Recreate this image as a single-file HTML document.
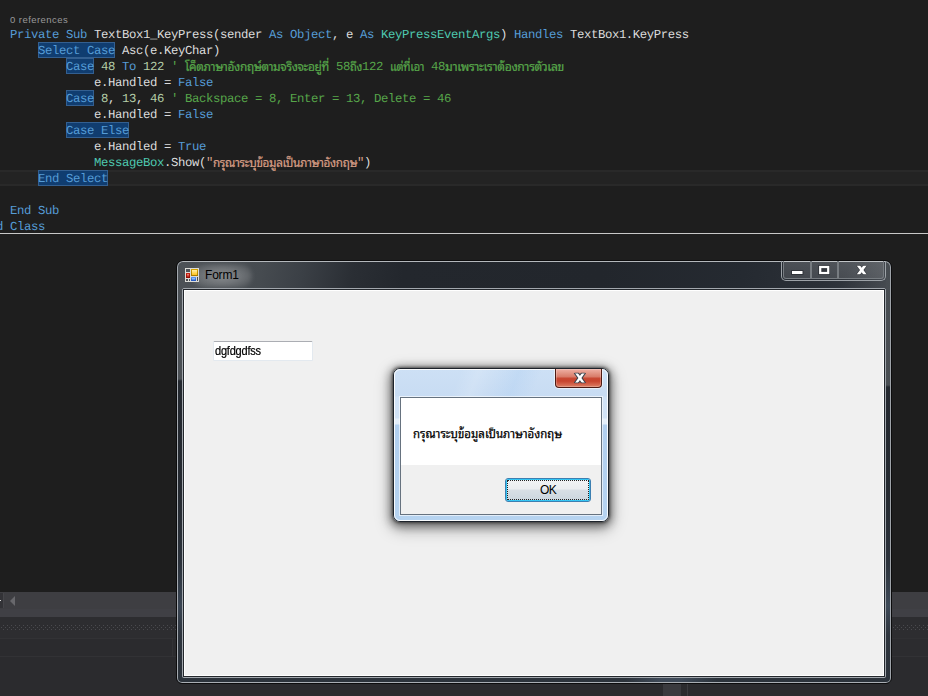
<!DOCTYPE html>
<html lang="th">
<head>
<meta charset="utf-8">
<title>Form1</title>
<style>
html,body{margin:0;padding:0;}
body{width:928px;height:696px;overflow:hidden;background:#1e1e1e;position:relative;font-family:"Liberation Sans","Loma","Noto Sans Thai",sans-serif;}
.abs{position:absolute;}
/* ---------- code editor ---------- */
#code{position:absolute;left:0;top:0;width:928px;height:233px;overflow:hidden;}
.ln{position:absolute;left:-18px;height:16px;line-height:16px;margin-top:1px;white-space:pre;font-family:"Liberation Mono","DejaVu Sans Mono",monospace;font-size:12.3px;color:#dcdcdc;letter-spacing:-0.3812px;text-rendering:geometricPrecision;}
.k{color:#569cd6;}
.t{color:#4ec9b0;}
.c{color:#57a64a;}
.s{color:#d69d85;}
.n{color:#b5cea8;}
.hb{position:absolute;height:16px;box-sizing:border-box;background:#103d70;border:1px solid #335f90;}
.th{display:inline-block;height:16px;vertical-align:top;overflow:visible;}
.th text{font-family:"Liberation Sans","Noto Sans Thai Looped","Loma",sans-serif;font-size:12.300px;fill:currentColor;stroke:currentColor;stroke-width:.2px;}
#refs{position:absolute;left:10px;top:14px;font-size:9.5px;letter-spacing:0.45px;line-height:12px;color:#999999;font-family:"Liberation Sans",sans-serif;}
#curline{position:absolute;left:0;top:170px;width:928px;height:16px;box-sizing:border-box;border-top:2px solid #292929;border-bottom:2px solid #292929;background:#232323;}
#split{position:absolute;left:0;top:233px;width:928px;height:1px;background:#c8c8c8;}

/* ---------- VS bottom chrome ---------- */
#hscroll{position:absolute;left:0;top:592px;width:928px;height:25px;background:linear-gradient(180deg,#3e3e42 0,#3e3e42 17px,#404045 17px,#404045 25px);}
#hsbox{position:absolute;left:0;top:593px;width:3px;height:15px;background:#333337;border-right:1px solid #46464a;}
#hsbox i{position:absolute;left:0;top:7px;width:1px;height:1px;background:#d8d8d8;}
#hsarrow{position:absolute;left:10px;top:595.5px;width:0;height:0;border-top:5px solid transparent;border-bottom:5px solid transparent;border-right:5px solid #68686c;}
#lower{position:absolute;left:0;top:617px;width:928px;height:79px;background:#2d2d30;}
#dots{position:absolute;left:0;top:8px;width:928px;height:5px;}
#lowbox{position:absolute;left:-1px;top:21px;width:174px;height:19px;border:1px solid #323235;background:#2b2b2e;box-sizing:border-box;}
#lowright{position:absolute;left:173px;top:21px;width:755px;height:19px;border-bottom:1px solid #323235;border-top:1px solid #303033;background:#2c2c2f;box-sizing:border-box;}
#lowest{position:absolute;left:0;top:40px;width:928px;height:39px;background:#2b2b2e;}
#tabblk{position:absolute;left:663px;top:67px;width:18px;height:12px;background:#3a3a3e;}
#tabln{position:absolute;left:687px;top:67px;width:1px;height:12px;background:#3c3c40;}

/* ---------- Form1 window (Aero dark glass) ---------- */
#win{position:absolute;left:176px;top:260px;width:716px;height:424px;overflow:hidden;box-sizing:border-box;border:1px solid #0c0c0d;border-radius:7px 7px 6px 6px;
 background:
  linear-gradient(115deg, rgba(255,255,255,0) 74%, rgba(255,255,255,.07) 79%, rgba(255,255,255,.02) 83%, rgba(255,255,255,.09) 88%, rgba(255,255,255,.10) 100%),
  linear-gradient(100deg,#4d5257 0px,#464b50 85px,#3b4046 125px,#2a2e34 175px,#23272d 225px,#22262c 420px,#252a31 560px,#2b3037 640px,#3a3f45 716px);
}
#win .inl{position:absolute;left:0;top:0;right:0;bottom:0;border:1px solid #a7abb0;border-radius:6px 6px 5px 5px;box-sizing:border-box;
 border-color:#b4b8bc #9ea3a9 #a9aeb4 #a4a9af;}
#win .sideL{position:absolute;left:1px;top:2px;width:4px;height:420px;background:linear-gradient(180deg,#4c5156 0,#4b5055 116px,#242930 118px,#252a31 230px,#2b323b 300px,#3a4553 343px,#2e353e 372px,#2b323a 416px);}
#win .sideR{position:absolute;right:1px;top:2px;width:4px;height:420px;background:linear-gradient(180deg,#474c51 0,#494e53 122px,#242930 124px,#252a31 230px,#2b323b 300px,#3d4957 343px,#2e353e 372px,#2b323a 416px);}
#win .botm{position:absolute;left:5px;right:5px;bottom:1px;height:4px;background:linear-gradient(90deg,#2c333b,#2c333b 63%,#3f4a58 68%,#3f4a58 71%,#2c333b 76%,#2c333b);}
#title{position:absolute;left:28px;top:7px;font-size:12px;line-height:14px;color:#000;letter-spacing:-0.2px;}
#tglow{position:absolute;left:16px;top:3px;width:59px;height:24px;border-radius:12px;background:radial-gradient(ellipse at center,rgba(255,255,255,.34) 0%,rgba(255,255,255,.22) 45%,rgba(255,255,255,0) 100%);filter:blur(2px);}
#cli-o{position:absolute;left:5px;top:27px;width:704px;height:390px;box-sizing:border-box;border:1px solid #a2a7ad;border-radius:2px;}
#cli-d{position:absolute;left:6px;top:28px;width:702px;height:388px;box-sizing:border-box;border:1px solid #23272c;}
#cli{position:absolute;left:7px;top:29px;width:700px;height:386px;box-sizing:border-box;border:1px solid #fff;background:#f0f0f0;}
#tb{position:absolute;left:29px;top:51px;width:100px;height:20px;box-sizing:border-box;border:1px solid #e3e9ef;border-top-color:#abadb3;border-radius:1.500px;background:#fff;}
#tb span{position:absolute;left:1px;top:3px;font-size:11px;line-height:13px;letter-spacing:-0.2px;color:#000;transform:scaleY(1.13);transform-origin:0 10.500px;-webkit-text-stroke:.2px #000;font-family:"Liberation Sans",sans-serif;}
#cbtns{position:absolute;left:604px;top:0;width:105px;height:20px;box-sizing:border-box;border:1px solid #9da2a7;border-top:none;border-radius:0 0 5px 5px;}
#cbtns .b{position:absolute;top:0;height:18px;box-sizing:border-box;border:1px solid #777c81;border-top:none;background:linear-gradient(180deg,rgba(255,255,255,.17),rgba(255,255,255,.12));}

/* ---------- MessageBox ---------- */
#mb{position:absolute;left:393px;top:368px;width:216px;height:154px;box-sizing:border-box;border:1px solid #1d232b;border-radius:7px;
 background:linear-gradient(112deg,rgba(255,255,255,0) 30%,rgba(255,255,255,.14) 38%,rgba(255,255,255,0) 46%,rgba(170,205,242,.3) 56%,rgba(255,255,255,0) 66%) 0 0/100% 28px no-repeat,linear-gradient(180deg,#cde0f5 0px,#c8dcf3 27px,#d0e2f6 28px,#d2e3f6 49px,#e6f0fb 50px,#e3eefa 55px,#b1cfef 56px,#b6d3f0 100%);
 box-shadow:0 0 3px 1px rgba(0,0,0,.5),0 2px 9px 3px rgba(0,0,0,.4),0 5px 16px 3px rgba(0,0,0,.27);}
#mb .inl{position:absolute;left:0;top:0;right:0;bottom:0;border:1px solid rgba(255,255,255,.92);border-radius:6px;}
#mb .cl{position:absolute;left:6px;top:28px;width:202px;height:118px;box-sizing:border-box;border:1px solid #66727f;background:#fff;box-shadow:0 0 0 1px rgba(255,255,255,.6);}
#mb .ft{position:absolute;left:0;top:67px;width:200px;height:49px;background:#f0f0f0;}
#mb .x{position:absolute;left:161px;top:0;width:47px;height:19px;box-sizing:border-box;border:1px solid #4d1a13;border-top:none;border-radius:0 0 4px 4px;
 background:linear-gradient(180deg,#f0b0a5 0px,#e39686 4px,#d87a68 8px,#c94a35 9px,#c7432d 12px,#d56a52 16px,#dd8468 18px);
 box-shadow:1px 0 0 rgba(255,255,255,.55),-1px 0 0 rgba(255,255,255,.55),0 1px 0 rgba(255,255,255,.55), inset 0 0 0 1px rgba(255,255,255,.22);}
#ok{position:absolute;left:104px;top:80px;width:86px;height:24px;box-sizing:border-box;border:1px solid #3c7fb1;border-radius:3px;
 background:linear-gradient(180deg,#f2f4f6 0,#eaedf0 10px,#d8dfe5 11px,#cbd6de 22px);
 box-shadow:inset 0 0 0 1px #34c6f4;font-size:12px;line-height:22px;text-align:center;color:#000;letter-spacing:-0.6px;}
#ok i{position:absolute;left:1px;top:1px;right:1px;bottom:1px;border:1px dotted #222;}
</style>
</head>
<body>
<div id="code">
<div id="refs">0 references</div>
<div id="curline"></div>
<div class="hb" style="left:38px;top:42px;width:77px"></div>
<div class="hb" style="left:66px;top:58px;width:28px"></div>
<div class="hb" style="left:66px;top:90px;width:28px"></div>
<div class="hb" style="left:66px;top:122px;width:63px"></div>
<div class="hb" style="left:38px;top:170px;width:70px"></div>
<div class="ln" style="top:26px">    <span class="k">Private Sub</span> TextBox1_KeyPress(sender <span class="k">As Object</span>, e <span class="k">As</span> <span class="t">KeyPressEventArgs</span>) <span class="k">Handles</span> TextBox1.KeyPress</div>
<div class="ln" style="top:42px">        <span class="k">Select Case</span> Asc(e.KeyChar)</div>
<div class="ln" style="top:58px">            <span class="k">Case</span> <span class="n">48</span> <span class="k">To</span> <span class="n">122</span> <span class="c">' <svg class="th" width="151" height="16" viewBox="0 0 151 16"><text x="0" y="11.500" textLength="144" lengthAdjust="spacingAndGlyphs">โค็ตภาษาอังกฤษ์ตามจริงจะอยู่ที่</text></svg>58<svg class="th" width="12" height="16" viewBox="0 0 12 16"><text x="0" y="11.500" textLength="12" lengthAdjust="spacingAndGlyphs">ถึง</text></svg>122 <svg class="th" width="41" height="16" viewBox="0 0 41 16"><text x="0" y="11.500" textLength="34" lengthAdjust="spacingAndGlyphs">แต่ที่เอา</text></svg>48<svg class="th" width="119" height="16" viewBox="0 0 119 16"><text x="0" y="11.500" textLength="119" lengthAdjust="spacingAndGlyphs">มาเพราะเราต้องการตัวเลข</text></svg></span></div>
<div class="ln" style="top:74px">                e.Handled = <span class="k">False</span></div>
<div class="ln" style="top:90px">            <span class="k">Case</span> <span class="n">8</span>, <span class="n">13</span>, <span class="n">46</span> <span class="c">' Backspace = 8, Enter = 13, Delete = 46</span></div>
<div class="ln" style="top:106px">                e.Handled = <span class="k">False</span></div>
<div class="ln" style="top:122px">            <span class="k">Case Else</span></div>
<div class="ln" style="top:138px">                e.Handled = <span class="k">True</span></div>
<div class="ln" style="top:154px">                <span class="t">MessageBox</span>.Show(<span class="s">"<svg class="th" width="144" height="16" viewBox="0 0 144 16"><text x="0" y="11.500" textLength="144" lengthAdjust="spacingAndGlyphs">กรุณาระบุข้อมูลเป็นภาษาอังกฤษ</text></svg>"</span>)</div>
<div class="ln" style="top:170px">        <span class="k">End Select</span></div>
<div class="ln" style="top:202px">    <span class="k">End Sub</span></div>
<div class="ln" style="top:218px"><span class="k">End Class</span></div>
</div>
<div id="split"></div>

<div id="hscroll"></div><div id="hsbox"><i></i></div><div id="hsarrow"></div>
<div id="lower">
  <svg id="dots" width="928" height="5" viewBox="0 0 928 5"><defs><pattern id="dp" width="4" height="4" patternUnits="userSpaceOnUse"><rect x="3" y="0" width="1" height="1" fill="#4a4a4e"/><rect x="1" y="2" width="1" height="1" fill="#4a4a4e"/></pattern></defs><rect width="928" height="5" fill="url(#dp)"/></svg>
  <div id="lowbox"></div><div id="lowright"></div>
  <div id="lowest"></div>
  <div id="tabblk"></div><div id="tabln"></div>
</div>

<div id="win">
  <div class="sideL"></div><div class="sideR"></div><div class="botm"></div>
  <div class="inl"></div>
  <div id="tglow"></div>
  <svg class="abs" style="left:8px;top:7px" width="16" height="16" viewBox="0 0 16 16">
    <defs>
      <linearGradient id="gy" x1="0" y1="0" x2="0" y2="1"><stop offset="0" stop-color="#fff0a8"/><stop offset="1" stop-color="#ffc41c"/></linearGradient>
      <linearGradient id="gr" x1="0" y1="0" x2="0" y2="1"><stop offset="0" stop-color="#f4887c"/><stop offset="1" stop-color="#b81a10"/></linearGradient>
      <linearGradient id="gb" x1="0" y1="0" x2="0" y2="1"><stop offset="0" stop-color="#a8ccff"/><stop offset="1" stop-color="#3f7fe6"/></linearGradient>
      <linearGradient id="gyb" x1="0" y1="0" x2="0" y2="1"><stop offset="0" stop-color="#d6a400"/><stop offset="1" stop-color="#a47a00"/></linearGradient>
      <linearGradient id="grb" x1="0" y1="0" x2="0" y2="1"><stop offset="0" stop-color="#cc2414"/><stop offset="1" stop-color="#8a0c06"/></linearGradient>
      <linearGradient id="gbb" x1="0" y1="0" x2="0" y2="1"><stop offset="0" stop-color="#5e9cf0"/><stop offset="1" stop-color="#1f52bc"/></linearGradient>
    </defs>
    <rect x="0" y="0" width="14" height="14" fill="#dcdcd8"/>
    <rect x="1" y="1" width="4" height="3" fill="#50545a"/>
    <rect x="1" y="5" width="4" height="5" fill="url(#grb)"/><rect x="2" y="6" width="2" height="3" fill="url(#gr)"/>
    <rect x="1" y="11" width="2" height="2" fill="#4a4d52"/><rect x="4" y="11" width="1" height="2" fill="#4a4d52"/>
    <rect x="6" y="1" width="7" height="7" fill="url(#gyb)"/><rect x="7" y="2" width="5" height="5" fill="url(#gy)"/>
    <rect x="6" y="9" width="5" height="4" fill="url(#gbb)"/><rect x="7" y="10" width="3" height="2" fill="url(#gb)"/>
    <rect x="12" y="9" width="1" height="4" fill="#4a4d52"/>
  </svg>
  <div id="title">Form1</div>
  <div id="cbtns">
    <div class="b" style="left:1px;width:28px;border-radius:0 0 0 3px"></div>
    <div class="b" style="left:29px;width:27px"></div>
    <div class="b" style="left:56px;width:46px;border-radius:0 0 3px 0"></div>
    <svg class="abs" style="left:0;top:0" width="105" height="20" viewBox="0 0 105 20">
      <rect x="9" y="9" width="12.500" height="5" fill="rgba(15,18,24,.38)"/><rect x="10" y="10" width="10.500" height="3" fill="#fff"/>
      <rect x="36" y="4" width="12" height="10" fill="rgba(15,18,24,.38)"/><rect x="38.200" y="6" width="8" height="6" fill="none" stroke="#fff" stroke-width="2.200"/>
      <clipPath id="cxa"><rect x="72" y="4.200" width="16" height="9.600"/></clipPath><clipPath id="cxb"><rect x="72" y="4.700" width="16" height="8.600"/></clipPath>
      <g clip-path="url(#cxa)" stroke="rgba(15,18,24,.45)" stroke-width="3.900" fill="none"><line x1="75.600" y1="3.500" x2="83.800" y2="14.500"/><line x1="83.800" y1="3.500" x2="75.600" y2="14.500"/></g>
      <g clip-path="url(#cxb)" stroke="#fff" stroke-width="2.800" fill="none"><line x1="75.600" y1="3.500" x2="83.800" y2="14.500"/><line x1="83.800" y1="3.500" x2="75.600" y2="14.500"/></g>
    </svg>
  </div>
  <div id="cli-o"></div><div id="cli-d"></div>
  <div id="cli"></div>
  <div id="tb" style="left:36px;top:80px"><span>dgfdgdfss</span></div>
</div>

<div id="mb">
  <div class="inl"></div>
  <div class="x"><svg class="abs" style="left:17px;top:3px" width="14" height="12" viewBox="0 0 14 12"><clipPath id="cxc"><rect x="0" y="0.700" width="14" height="10.600"/></clipPath><clipPath id="cxd"><rect x="0" y="1.500" width="14" height="9"/></clipPath>
    <g clip-path="url(#cxc)" stroke="#3d424b" stroke-width="4.500" fill="none"><line x1="2.600" y1="0" x2="11.200" y2="12"/><line x1="11.200" y1="0" x2="2.600" y2="12"/></g>
    <g clip-path="url(#cxd)" stroke="#fff" stroke-width="2.400" fill="none"><line x1="2.600" y1="0" x2="11.200" y2="12"/><line x1="11.200" y1="0" x2="2.600" y2="12"/></g></svg></div>
  <div class="cl">
    <div class="ft"></div>
    <svg class="abs" style="left:10px;top:26px" width="170" height="22" viewBox="0 0 170 22"><text x="2" y="13.500" textLength="149" lengthAdjust="spacingAndGlyphs" font-size="11.500" fill="#000" stroke="#000" stroke-width=".25" style="font-family:'Liberation Sans','Noto Sans Thai Looped','Loma',sans-serif">กรุณาระบุข้อมูลเป็นภาษาอังกฤษ</text></svg>
    <div id="ok">OK<i></i></div>
  </div>
</div>
</body>
</html>
